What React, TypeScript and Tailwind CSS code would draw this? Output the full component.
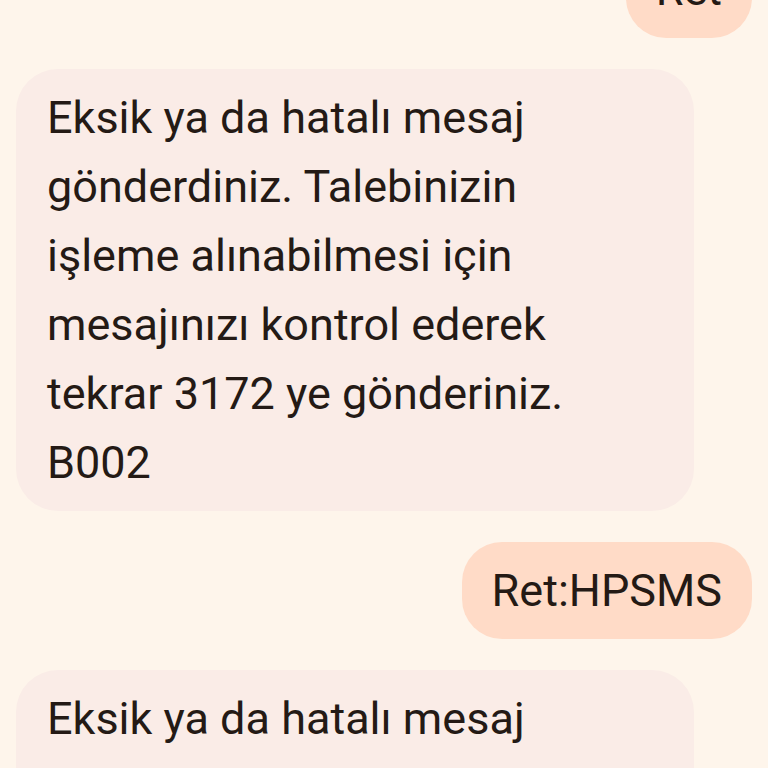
const font = { fontFamily: 'Roboto, "Noto Sans", sans-serif' };

function Incoming({ lines }: { lines: string[] }) {
  return (
    <div className="flex justify-start">
      <div className="w-[678px] rounded-[42px] bg-[#faece7] px-[31px] py-[14px] text-[45px] leading-[69px] text-[#241a15]">
        {lines.map((l, i) => (
          <div key={i}>{l}</div>
        ))}
      </div>
    </div>
  );
}

function Outgoing({ text }: { text: string }) {
  return (
    <div className="flex justify-end">
      <div className="rounded-[40px] bg-[#ffdbc7] px-[30px] py-[14px] text-[45px] leading-[69px] text-[#241a15]">
        {text}
      </div>
    </div>
  );
}

const message = [
  'Eksik ya da hatalı mesaj',
  'gönderdiniz. Talebinizin',
  'işleme alınabilmesi için',
  'mesajınızı kontrol ederek',
  'tekrar 3172 ye gönderiniz.',
  'B002',
];

export default function App() {
  return (
    <div className="h-[768px] w-[768px] overflow-hidden bg-[#fef5eb]" style={font}>
      <div className="-mt-[59px] flex flex-col gap-[31px] px-4">
        <Outgoing text="Ret" />
        <Incoming lines={message} />
        <Outgoing text="Ret:HPSMS" />
        <Incoming lines={message} />
      </div>
    </div>
  );
}
